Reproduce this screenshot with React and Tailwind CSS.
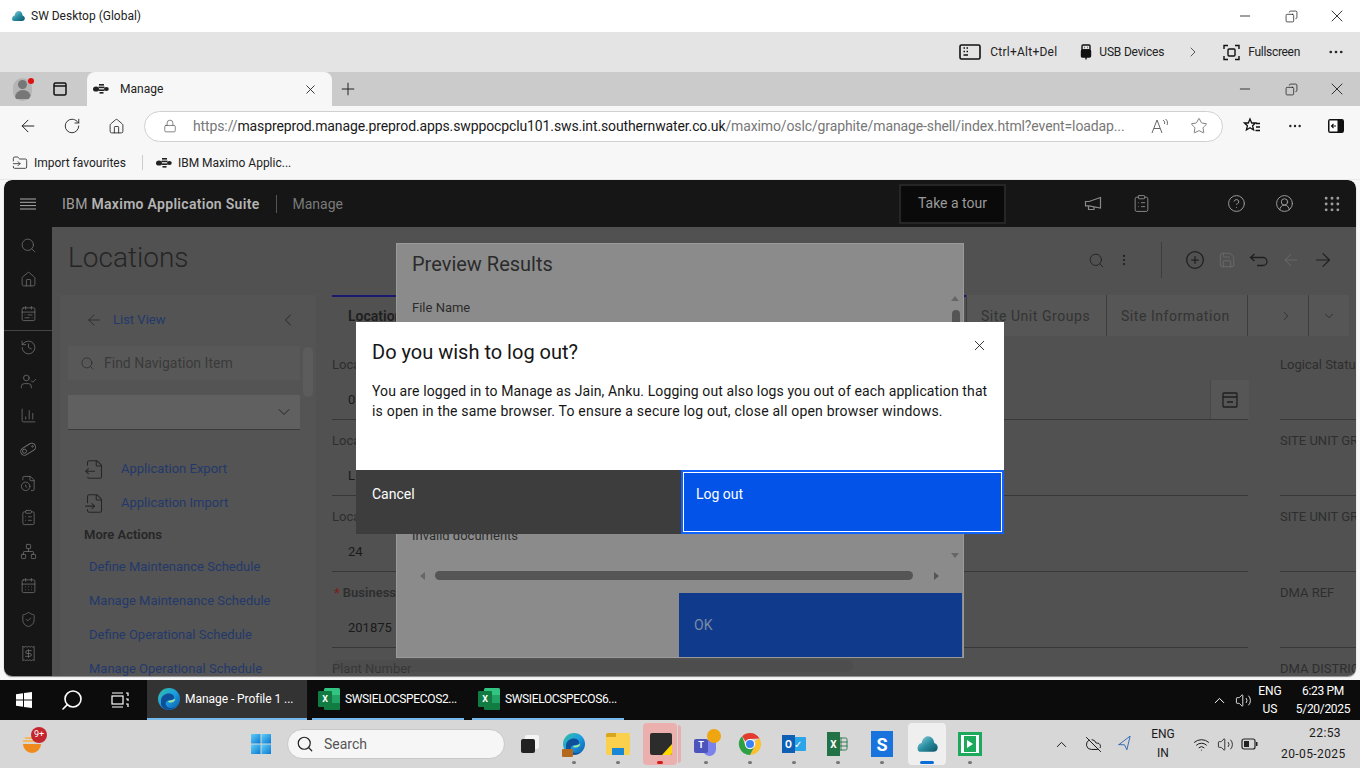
import {
  ArrowLeft,
  ArrowRight,
  ChevronDown,
  ChevronLeft,
  ChevronRight,
  ChevronUp,
  CircleHelp,
  CirclePlus,
  CalendarDays,
  ChartColumn,
  ClipboardList,
  CircleUserRound,
  EllipsisVertical,
  FileInput,
  FileOutput,
  FolderInput,
  Grip,
  History,
  House,
  Lock,
  Minus,
  MoreHorizontal,
  Network,
  Navigation,
  Plus,
  RotateCw,
  Save,
  Search,
  ShieldCheck,
  Star,
  UserCheck,
  Volume2,
  Wifi,
  X,
  CloudOff,
  Receipt,
  FileClock,
  Table,
  Copy,
  CalendarRange,
} from "lucide-react";

const ui = "font-['Roboto',sans-serif]";

function WinControls() {
  return (
    <div className="flex items-center ml-auto text-[#111] h-full">
      <div className="w-[46px] flex justify-center">
        <Minus size={16} strokeWidth={1.2} />
      </div>
      <div className="w-[46px] flex justify-center">
        <Copy size={13} strokeWidth={1.3} className="-scale-x-100" />
      </div>
      <div className="w-[46px] flex justify-center">
        <X size={20} strokeWidth={1} />
      </div>
    </div>
  );
}

function Bee({ className }) {
  return (
    <svg width="16" height="12" viewBox="0 0 16 12" className={className}>
      <ellipse cx="3" cy="6" rx="3" ry="2.6" fill="#222" />
      <ellipse cx="13.4" cy="6" rx="2.4" ry="2" fill="#222" />
      <rect x="6" y="1" width="5" height="1.6" fill="#222" />
      <rect x="5.5" y="3.6" width="6" height="1.6" fill="#222" />
      <rect x="5.5" y="6.4" width="6" height="1.6" fill="#222" />
      <rect x="6.5" y="9" width="4" height="1.6" fill="#222" />
    </svg>
  );
}

function SwLogo({ size = 14 }) {
  return (
    <svg width={size} height={size} viewBox="0 0 14 14">
      <defs>
        <linearGradient id="swg" x1="0" y1="0" x2="1" y2="1">
          <stop offset="0" stopColor="#9fd8e0" />
          <stop offset="0.5" stopColor="#2a8fa3" />
          <stop offset="1" stopColor="#0c5263" />
        </linearGradient>
      </defs>
      <path d="M1 10 C1 7.5 2.5 6.5 3.6 6.4 C4 3.4 6 2 7.6 2 C10 2 11.4 4 11.6 6.4 C13 6.8 14 8 13.8 9.6 C13.6 11.4 12.4 12 11 12 L3 12 C1.8 12 1 11.2 1 10 Z" fill="url(#swg)" />
    </svg>
  );
}

function Edge({ size = 24, id = "e1" }) {
  return (
    <svg width={size} height={size} viewBox="0 0 24 24">
      <defs>
        <linearGradient id={id} x1="0" y1="0" x2="1" y2="1">
          <stop offset="0" stopColor="#35c1a0" />
          <stop offset="0.5" stopColor="#1b9de2" />
          <stop offset="1" stopColor="#0c59a4" />
        </linearGradient>
      </defs>
      <circle cx="12" cy="12" r="11" fill={`url(#${id})`} />
      <path d="M4 13 C5 7 12 5 16 8 C18 10 17 13 14 13 C10 13 8 15 9 18 C10 21 14 22 18 20 C15 24 7 24 4 18 Z" fill="#0f4f9a" />
      <path d="M11 14.5 C12 13 17 13.5 18 11.5 C19 14 15 16 12 15.5 Z" fill="#9fe6a0" />
    </svg>
  );
}

function ExcelIcon({ size = 18 }) {
  return (
    <div className="relative" style={{ width: size, height: size }}>
      <div className="absolute right-0 top-0 bottom-0 w-[72%] bg-[#21a366] rounded-[2px] overflow-hidden flex flex-col">
        <div className="flex-1 bg-[#33c481]" />
        <div className="flex-1 bg-[#21a366]" />
        <div className="flex-1 bg-[#107c41]" />
      </div>
      <div className="absolute left-0 top-[3px] bottom-[3px] w-[62%] bg-[#107c41] rounded-[1px] flex items-center justify-center text-white text-[9px] font-bold leading-none">
        X
      </div>
    </div>
  );
}

function Win11({ size = 22 }) {
  return (
    <svg width={size} height={size} viewBox="0 0 22 22">
      <defs>
        <linearGradient id="w11" x1="0" y1="0" x2="1" y2="1">
          <stop offset="0" stopColor="#5fd0f6" />
          <stop offset="1" stopColor="#0a78d4" />
        </linearGradient>
      </defs>
      <rect x="1" y="1" width="9.5" height="9.5" fill="url(#w11)" />
      <rect x="11.5" y="1" width="9.5" height="9.5" fill="url(#w11)" />
      <rect x="1" y="11.5" width="9.5" height="9.5" fill="url(#w11)" />
      <rect x="11.5" y="11.5" width="9.5" height="9.5" fill="url(#w11)" />
    </svg>
  );
}

function Chrome() {
  return (
    <svg width="24" height="24" viewBox="0 0 24 24">
      <path d="M12 1 A11 11 0 0 1 21.6 6.6 L12 7 A5 5 0 0 0 7.6 9.6 L4.2 4.2 A11 11 0 0 1 12 1Z" fill="#e33b2e" />
      <path d="M21.6 6.6 A11 11 0 0 1 12 23 L16.4 14.6 A5 5 0 0 0 16.6 9 Z" fill="#fbc02d" />
      <path d="M4.2 4.2 A11 11 0 0 0 12 23 L16.4 14.6 A5 5 0 0 1 7.6 14.6 Z" fill="#2ea043" />
      <circle cx="12" cy="12" r="5" fill="#fff" />
      <circle cx="12" cy="12" r="4" fill="#3b82f6" />
    </svg>
  );
}

function Bullhorn({ className }) {
  return (
    <svg width="18" height="16" viewBox="0 0 18 16" fill="none" stroke="currentColor" strokeWidth="1.2" className={className}>
      <path d="M16.5 1.5 V12 L5 9.8 H1.5 V5.5 H5 Z" />
      <path d="M4.5 10 V13.5 H10 V11" />
    </svg>
  );
}

function Belt() {
  return (
    <svg width="18" height="18" viewBox="0 0 18 18" fill="none" stroke="currentColor" strokeWidth="0.9">
      <rect x="1" y="5.5" width="16" height="7.5" rx="3.7" transform="rotate(-32 9 9)" />
      <circle cx="5.5" cy="11.2" r="2" />
      <circle cx="13.5" cy="6.4" r="0.8" />
    </svg>
  );
}

function PageHeader() {
  return (
    <div className="h-[47px] bg-[#161616] flex items-center shrink-0 rounded-t-[8px]">
      <div className="w-[48px] flex justify-center text-[#aaa]">
        <svg width="16" height="12" viewBox="0 0 16 12" stroke="currentColor" strokeWidth="1">
          <path d="M0 1 H16 M0 4.3 H16 M0 7.6 H16 M0 11 H16" />
        </svg>
      </div>
      <div className="ml-[10px] mt-[2px] text-[14px] tracking-[0.3px] text-[#a0a0a0]">
        IBM <span className="font-semibold text-[#b4b4b4]">Maximo Application Suite</span>
      </div>
      <div className="w-px h-[18px] bg-[#555] ml-[16px]" />
      <div className="ml-[16px] mt-[2px] text-[14px] text-[#7a7a7a]">Manage</div>
      <div className="ml-[556px] w-[107px] h-[40px] bg-[#0a0a0a] border-2 border-[#262626] flex items-center justify-center text-[14px] text-[#9a9a9a]">
        Take a tour
      </div>
      <Bullhorn className="ml-[78px] text-[#8a8a8a]" />
      <ClipboardList size={19} strokeWidth={1.2} className="ml-[30px] text-[#8a8a8a]" />
      <CircleHelp size={19} strokeWidth={1.2} className="ml-[76px] text-[#a0a0a0]" />
      <CircleUserRound size={19} strokeWidth={1.2} className="ml-[29px] text-[#a0a0a0]" />
      <Grip size={20} strokeWidth={1.5} className="ml-[28px] text-[#a0a0a0]" />
    </div>
  );
}

const sideIcons = [
  Search,
  House,
  CalendarRange,
  History,
  UserCheck,
  ChartColumn,
  Belt,
  FileClock,
  ClipboardList,
  Network,
  CalendarDays,
  ShieldCheck,
  Receipt,
];

function SideBar() {
  return (
    <div className="w-[48px] bg-[#161616] shrink-0 flex flex-col items-center pt-[1px]">
      {sideIcons.map((Icon, i) => (
        <div key={i} className={"h-[34px] w-full flex items-center justify-center text-[#737373] " + (i === 3 ? "border-t border-[#444]" : "")}>
          <Icon size={17} strokeWidth={1.1} />
        </div>
      ))}
    </div>
  );
}

function NavLink({ children }) {
  return <div className="h-[34px] flex items-center pl-[21px] text-[13px] text-[#23396b] whitespace-nowrap">{children}</div>;
}

function LeftPanel() {
  return (
    <div className="w-[256px] bg-[#545454] shrink-0 pl-[8px] relative">
      <div className="flex items-center h-[50px] pl-[17px] text-[13px] text-[#23396b] whitespace-nowrap">
        <ArrowLeft size={18} strokeWidth={1} className="text-[#262626] mr-[10px]" />
        List View
        <ChevronLeft size={20} strokeWidth={1.2} className="text-[#262626] ml-[113px]" />
      </div>
      <div className="w-[232px] h-[34px] bg-[#585858] flex items-center pl-[12px] mt-[1px] text-[14px] text-[#3a3a3a]">
        <Search size={15} strokeWidth={1.1} className="text-[#262626] mr-[9px]" />
        Find Navigation Item
      </div>
      <div className="w-[232px] h-[35px] bg-[#606060] border-b border-[#3a3a3a] mt-[15px] flex items-center justify-end pr-[6px] text-[#262626]">
        <ChevronDown size={20} strokeWidth={1.2} />
      </div>
      <div className="h-[34px] flex items-center mt-[22px] pl-[16px] text-[13px] text-[#23396b]">
        <FileOutput size={21} strokeWidth={1.2} className="text-[#262626] mr-[16px]" />
        Application Export
      </div>
      <div className="h-[34px] flex items-center pl-[16px] text-[13px] text-[#23396b]">
        <FileInput size={21} strokeWidth={1.2} className="text-[#262626] mr-[16px]" />
        Application Import
      </div>
      <div className="h-[30px] flex items-center pl-[16px] text-[13px] font-semibold text-[#262626]">More Actions</div>
      <NavLink>Define Maintenance Schedule</NavLink>
      <NavLink>Manage Maintenance Schedule</NavLink>
      <NavLink>Define Operational Schedule</NavLink>
      <NavLink>Manage Operational Schedule</NavLink>
      <div className="absolute right-[3px] top-[52px] w-[10px] h-[50px] rounded-full bg-[#5c5c5c]" />
    </div>
  );
}

function Field({ label, value, children, bold }) {
  return (
    <div className="h-[76px]">
      <div className={"h-[20px] flex items-center text-[13px] text-[#2e2e2e] whitespace-nowrap " + (bold ? "font-semibold" : "")}>
        {bold && <span className="text-[#7a1f1f] ml-[2px] mr-[3px]">*</span>}
        {label}
      </div>
      <div className="h-[40px] mt-[5px] pl-[16px] border-b border-[#383838] flex items-center text-[13px] text-[#1a1a1a]">
        {value}
        {children}
      </div>
    </div>
  );
}

function Tabs() {
  return (
    <div className="h-[41px] flex items-center text-[14px] text-[#333] shrink-0 tracking-[0.55px]">
      <div className="w-[634px] h-full border-t-2 border-[#1a1a6e] pl-[16px] flex items-center font-semibold text-[#1f1f1f] tracking-normal">
        Locations
      </div>
      <div className="h-full w-px bg-[#3d3d3d]" />
      <div className="w-[140px] h-full pl-[14px] pt-[1px] flex items-center bg-[#565656] border-r border-[#3d3d3d] whitespace-nowrap">Site Unit Groups</div>
      <div className="w-[141px] h-full pl-[14px] pt-[1px] flex items-center bg-[#565656] border-r border-[#3d3d3d] whitespace-nowrap">Site Information</div>
      <div className="w-[61px] h-full flex items-center justify-center bg-[#565656] border-r border-[#3d3d3d] text-[#222]">
        <ChevronRight size={14} strokeWidth={1.2} className="ml-[16px]" />
      </div>
      <div className="w-[40px] h-full flex items-center justify-center bg-[#565656] text-[#222]">
        <ChevronDown size={14} strokeWidth={1.2} />
      </div>
    </div>
  );
}

function Content() {
  return (
    <div className="flex-1 min-w-0 bg-[#515151] flex flex-col overflow-hidden">
      <div className="h-[68px] shrink-0 flex items-start">
        <div className="ml-[16px] mt-[10px] text-[28px] font-light text-[#252525]">Locations</div>
        <div className="ml-auto flex items-center mt-[15px] text-[#1f1f1f] h-[36px]">
          <Search size={17} strokeWidth={1.2} />
          <EllipsisVertical size={14} strokeWidth={1.8} className="ml-[12px]" />
          <div className="w-px h-[36px] bg-[#3d3d3d] ml-[30px]" />
          <CirclePlus size={20} strokeWidth={1.5} className="ml-[23px]" />
          <Save size={18} strokeWidth={1.1} className="ml-[13px] text-[#6e6e6e]" />
          <svg width="20" height="14" viewBox="0 0 20 14" fill="none" stroke="currentColor" strokeWidth="1.3" className="ml-[13px]">
            <path d="M5.5 1 L1.5 4.5 L5.5 8 M1.5 4.5 H14 A4 4 0 0 1 14 12.5 H8" />
          </svg>
          <ArrowLeft size={20} strokeWidth={1} className="ml-[12px] text-[#6e6e6e]" />
          <ArrowRight size={22} strokeWidth={1.3} className="ml-[11px] mr-[22px]" />
        </div>
      </div>
      <div className="flex-1 flex pl-[8px] gap-[16px] min-h-0">
        <LeftPanel />
        <div className="flex-1 min-w-0 flex flex-col">
          <Tabs />
          <div className="flex pt-[19px]">
            <div className="w-[916px] shrink-0">
              <Field label="Location" value="0">
                <div className="ml-auto -mr-px w-[39px] h-full border-l border-[#484848] bg-[#565656] flex items-center justify-center text-[#1f1f1f]">
                  <svg width="18" height="18" viewBox="0 0 18 18" fill="none" stroke="currentColor" strokeWidth="1.3">
                    <rect x="2" y="2" width="14" height="14" rx="1" />
                    <path d="M2 6 H16 M6 11 H12" />
                  </svg>
                </div>
              </Field>
              <Field label="Location" value="L" />
              <Field label="Location" value="24" />
              <Field label="Business" value="201875" bold />
              <Field label="Plant Number" value="" />
            </div>
            <div className="flex-1 ml-[32px] overflow-hidden">
              <Field label="Logical Status" value="" />
              <Field label="SITE UNIT GROUP" value="" />
              <Field label="SITE UNIT GROUP" value="" />
              <Field label="DMA REF" value="" />
              <Field label="DMA DISTRICT" value="" />
            </div>
          </div>
        </div>
      </div>
    </div>
  );
}

function PreviewModal() {
  return (
    <div className="absolute left-[396px] top-[243px] w-[568px] h-[415px] bg-[#8b8b8b] border border-[#9a9a9a] text-[#2b2b2b]">
      <div className="pl-[15px] pt-[6px] text-[20px] leading-[28px]">Preview Results</div>
      <div className="pl-[15px] mt-[21px] text-[13px] leading-[18px]">File Name</div>
      <div className="pl-[15px] mt-[210px] text-[13px] leading-[18px]">Invalid documents</div>
      <div className="absolute right-[3px] top-[52px] bottom-[99px] w-[10px] flex flex-col items-center justify-between">
        <div className="w-0 h-0 border-x-[4px] border-x-transparent border-b-[5px] border-b-[#666]" />
        <div className="w-0 h-0 border-x-[4px] border-x-transparent border-t-[5px] border-t-[#666]" />
      </div>
      <div className="absolute right-[3px] top-[66px] w-[8px] h-[20px] rounded-full bg-[#555]" />
      <div className="absolute left-[23px] right-[24px] top-[327px] flex items-center">
        <div className="w-0 h-0 border-y-[4px] border-y-transparent border-r-[5px] border-r-[#666]" />
        <div className="flex-1 h-[9px] rounded-full bg-[#555] ml-[10px] mr-[21px]" />
        <div className="w-0 h-0 border-y-[4px] border-y-transparent border-l-[5px] border-l-[#555]" />
      </div>
      <div className="absolute right-[1px] bottom-[0px] w-[283px] h-[64px] bg-[#103a8c] flex items-center pl-[15px] text-[14px] text-[#7b8aa3]">
        OK
      </div>
    </div>
  );
}

function LogoutModal() {
  return (
    <div className="absolute left-[356px] top-[322px] w-[648px] h-[212px] bg-white flex flex-col">
      <div className="flex-1 px-[16px] relative">
        <div className="text-[20px] leading-[28px] mt-[16px] text-[#161616]">Do you wish to log out?</div>
        <div className="text-[14px] leading-[20px] mt-[15px] text-[#161616] tracking-[0.12px] whitespace-nowrap">
          You are logged in to Manage as Jain, Anku. Logging out also logs you out of each application that
          <br />
          <span className="tracking-[0.2px]">is open in the same browser. To ensure a secure log out, close all open browser windows.</span>
        </div>
        <X size={17} strokeWidth={1.2} className="absolute right-[16px] top-[15px] text-[#161616]" />
      </div>
      <div className="h-[64px] flex text-[14px] text-white">
        <div className="w-[325px] bg-[#3d3d3d] pl-[16px] pt-[14px]">Cancel</div>
        <div className="flex-1 bg-[#0353e9] border-2 border-[#0f62fe] outline outline-1 -outline-offset-3 outline-white pl-[13px] pt-[12px]">Log out</div>
      </div>
    </div>
  );
}

function InnerTaskbar() {
  return (
    <div className="h-[40px] bg-[#0c0c0c] flex items-center text-white text-[12px] shrink-0">
      <div className="w-[48px] flex justify-center">
        <svg width="16" height="16" viewBox="0 0 16 16" fill="#fff">
          <path d="M0 2.2 L7 1.2 V7.5 H0 Z M8 1 L16 0 V7.5 H8 Z M0 8.5 H7 V14.8 L0 13.8 Z M8 8.5 H16 V16 L8 15 Z" />
        </svg>
      </div>
      <div className="w-[48px] flex justify-center">
        <Search size={24} strokeWidth={1.6} className="-scale-x-100" />
      </div>
      <div className="w-[48px] flex justify-center">
        <svg width="18" height="18" viewBox="0 0 18 18" fill="none" stroke="#fff" strokeWidth="1.2">
          <rect x="1" y="5" width="11" height="8" />
          <path d="M1 2 H12 M1 16 H12 M15 2 H17 V5 M15 8 H17 V10 M15 13 H17 V16" />
        </svg>
      </div>
      <div className="w-[3px]" />
      <div className="w-[160px] h-full bg-[#333] border-b-2 border-[#76b9ed] flex items-center pl-[10px] whitespace-nowrap tracking-[-0.05px]">
        <Edge id="e2" size={24} />
        <span className="ml-[4px]">Manage - Profile 1 ...</span>
      </div>
      <div className="w-[5px]" />
      <div className="w-[152px] h-full border-b-2 border-[#76b9ed] flex items-center pl-[6px] whitespace-nowrap tracking-[-0.35px]">
        <ExcelIcon size={22} />
        <span className="ml-[5px]">SWSIELOCSPECOS2...</span>
      </div>
      <div className="w-[8px]" />
      <div className="w-[152px] h-full border-b-2 border-[#76b9ed] flex items-center pl-[6px] whitespace-nowrap tracking-[-0.35px]">
        <ExcelIcon size={22} />
        <span className="ml-[5px]">SWSIELOCSPECOS6...</span>
      </div>
      <div className="ml-auto flex items-center">
        <ChevronUp size={17} strokeWidth={1.4} />
        <Volume2 size={17} strokeWidth={1.2} className="ml-[7px]" />
        <div className="ml-[4px] w-[28px] text-center leading-[18px]">
          ENG
          <br />
          US
        </div>
        <div className="ml-[11px] w-[56px] text-center leading-[18px] mr-[9px] whitespace-nowrap tracking-[-0.3px]">
          6:23 PM
          <br />
          5/20/2025
        </div>
      </div>
    </div>
  );
}

function Dock({ children, dot, bg, w = 44 }) {
  return (
    <div className={"relative h-[42px] flex items-center justify-center rounded-[4px] shrink-0 " + (bg || "")} style={{ width: w }}>
      {children}
      {dot && <div className={"absolute bottom-[1px] left-1/2 -translate-x-1/2 h-[3px] rounded-full " + dot} />}
    </div>
  );
}

function OuterTaskbar() {
  return (
    <div className="h-[48px] bg-[#d7d7d7] flex items-center text-[#1a1a1a] text-[12px] relative">
      <div className="w-[64px] relative flex justify-center">
        <svg width="24" height="24" viewBox="0 0 24 24">
          <path d="M3 12 H21 A9 9 0 0 1 3 12Z" fill="#ef8a1f" />
          <path d="M5 6 H14 M3 9 H16" stroke="#f4b860" strokeWidth="2" />
        </svg>
        <div className="absolute left-[31px] -top-[5px] w-[16px] h-[16px] rounded-full bg-[#c4262e] text-white text-[9px] flex items-center justify-center">
          9+
        </div>
      </div>
      <div className="ml-[186px]">
        <Win11 />
      </div>
      <div className="ml-[15px] w-[218px] h-[30px] rounded-full bg-[#f6f6f6] border border-[#c8c8c8] flex items-center pl-[8px] text-[14px] text-[#555] shrink-0">
        <Search size={18} strokeWidth={1.6} className="text-[#222] mr-[10px]" />
        Search
      </div>
      <div className="ml-[3px] flex items-center">
        <Dock>
          <div className="relative w-[18px] h-[18px]">
            <div className="absolute right-0 top-0 w-[14px] h-[14px] bg-[#f4f4f4] rounded-[2px]" />
            <div className="absolute left-0 bottom-0 w-[14px] h-[14px] bg-[#222] rounded-[2px]" />
          </div>
        </Dock>
        <Dock dot="w-[4px] bg-[#777]">
          <Edge id="e3" size={24} />
          <div className="absolute left-[10px] bottom-[8px] w-[11px] h-[8px] bg-[#b4691d] rounded-[1px]" />
        </Dock>
        <Dock dot="w-[4px] bg-[#777]">
          <div className="w-[24px] h-[22px] rounded-[2px] bg-[#fbd04c] relative overflow-hidden">
            <div className="absolute left-0 top-0 w-[10px] h-[4px] bg-[#d9a520]" />
            <div className="absolute left-[6px] right-[6px] bottom-0 h-[7px] bg-[#1a86d6]" />
          </div>
        </Dock>
        <div className="w-[3px]" />
        <div className="flex items-center w-[38px] shrink-0">
          <Dock bg="bg-[#ebb0ad] h-[40px]" dot="w-[6px] bg-[#d01c1c]" w={34}>
            <div className="w-[22px] h-[22px] bg-[#2c2c2c] rounded-[2px] relative overflow-hidden ml-[1px]">
              <div className="absolute right-0 bottom-0 w-0 h-0 border-l-[10px] border-l-transparent border-b-[11px] border-b-[#ffd800]" />
            </div>
          </Dock>
          <div className="w-[3px] ml-[1px] h-[38px] rounded-r-[3px] bg-[#e4b0ad]" />
        </div>
        <div className="w-[3px]" />
        <Dock dot="w-[4px] bg-[#777]">
          <div className="relative w-[24px] h-[24px]">
            <div className="absolute left-0 bottom-[3px] w-[14px] h-[14px] bg-[#4b53bc] rounded-[2px] text-white text-[9px] font-bold flex items-center justify-center z-10">T</div>
            <div className="absolute left-[9px] bottom-0 w-[13px] h-[16px] bg-[#7b83eb] rounded-b-full" />
            <div className="absolute right-[-3px] top-[-3px] w-[14px] h-[14px] rounded-full bg-[#eea50e]" />
          </div>
        </Dock>
        <Dock dot="w-[4px] bg-[#777]">
          <Chrome />
        </Dock>
        <Dock dot="w-[4px] bg-[#777]">
          <div className="relative w-[24px] h-[24px]">
            <div className="absolute right-0 top-[5px] w-[17px] h-[14px] bg-[#2aa5e8] rounded-[1px] text-white text-[10px] flex items-center justify-center">✓</div>
            <div className="absolute left-0 top-[3px] w-[13px] h-[18px] bg-[#0f5fb5] text-white text-[10px] font-bold flex items-center justify-center">O</div>
          </div>
        </Dock>
        <Dock dot="w-[4px] bg-[#777]">
          <div className="relative w-[22px] h-[24px]">
            <Table size={16} strokeWidth={1.3} className="absolute right-0 top-[4px] text-[#217346]" />
            <div className="absolute left-0 top-0 w-[13px] h-[24px] bg-[#217346] text-white text-[10px] font-bold flex items-center justify-center">X</div>
          </div>
        </Dock>
        <Dock dot="w-[4px] bg-[#777]">
          <div className="w-[22px] h-[26px] bg-[#1874dc] text-white text-[18px] font-bold flex items-center justify-center">S</div>
        </Dock>
        <div className="w-[4px]" />
        <Dock bg="bg-[#efefef]" dot="w-[14px] bg-[#0a6cd6]" w={38}>
          <SwLogo size={22} />
        </Dock>
        <div className="w-[2px]" />
        <Dock dot="w-[4px] bg-[#777]">
          <div className="w-[24px] h-[24px] border-[3px] border-[#1ca95b] bg-white flex items-center justify-center">
            <div className="w-[12px] h-[16px] bg-[#1ca95b] flex items-center justify-center">
              <div className="w-0 h-0 border-y-[4px] border-y-transparent border-l-[6px] border-l-white" />
            </div>
          </div>
        </Dock>
      </div>
      <div className="ml-auto flex items-center">
        <ChevronUp size={17} strokeWidth={1.4} />
        <CloudOff size={17} strokeWidth={1.4} className="ml-[15px]" />
        <Navigation size={16} strokeWidth={1.2} className="ml-[15px] text-[#1f5fae] -rotate-12" />
        <div className="ml-[15px] w-[30px] text-center leading-[19px]">
          ENG
          <br />
          IN
        </div>
        <Wifi size={17} strokeWidth={1.4} className="ml-[15px]" />
        <Volume2 size={17} strokeWidth={1.2} className="ml-[7px]" />
        <svg width="17" height="12" viewBox="0 0 17 12" className="ml-[7px]">
          <rect x="1" y="1" width="13" height="10" rx="2" fill="none" stroke="#222" strokeWidth="1.2" />
          <rect x="3" y="3" width="5" height="6" fill="#222" />
          <rect x="15" y="4" width="1.5" height="4" fill="#222" />
        </svg>
        <div className="ml-[23px] w-[60px] text-right leading-[21px] mr-[19px] whitespace-nowrap tracking-[0.4px]">
          22:53
          <br />
          20-05-2025
        </div>
      </div>
    </div>
  );
}

export default function App() {
  return (
    <div className={"w-[1360px] h-[768px] relative overflow-hidden bg-[#f7f7f7] flex flex-col " + ui}>
      {/* remote desktop title */}
      <div className="h-[32px] bg-white flex items-center pl-[11px] text-[12px] text-[#222] shrink-0">
        <SwLogo />
        <span className="ml-[6px]">SW Desktop (Global)</span>
        <WinControls />
      </div>
      <div className="h-[40px] bg-[#e4e4e4] flex items-center justify-end text-[12px] text-[#222] shrink-0">
        <svg width="22" height="16" viewBox="0 0 22 16" className="mr-[9px]">
          <rect x="1" y="1" width="20" height="14" rx="1.5" fill="none" stroke="#111" strokeWidth="1.6" />
          <path d="M4.5 4 H6 M7.5 4 H9 M4.5 7.5 H6 M7.5 7.5 H9 M4.5 11 H9" stroke="#111" strokeWidth="1.5" />
        </svg>
        <span className="tracking-[0.25px]">Ctrl+Alt+Del</span>
        <svg width="14" height="16" viewBox="0 0 14 16" fill="none" stroke="#111" strokeWidth="1.4" className="ml-[22px] mr-[6px]">
          <rect x="3" y="1" width="8" height="5" rx="1" />
          <rect x="2.5" y="6" width="9" height="7" rx="1" fill="#111" />
          <path d="M5.5 3.5 H6 M8 3.5 H8.5 M7 13 V15.5" />
        </svg>
        <span className="tracking-[-0.2px]">USB Devices</span>
        <ChevronRight size={16} strokeWidth={1.1} className="ml-[21px]" />
        <svg width="17" height="17" viewBox="0 0 17 17" fill="none" stroke="#111" strokeWidth="1.4" className="ml-[22px] mr-[8px]">
          <path d="M1 5 V1.5 H5 M12 1.5 H16 V5 M16 12 V15.5 H12 M5 15.5 H1 V12" />
          <rect x="5" y="5" width="7" height="7" rx="1" />
        </svg>
        <span className="tracking-[-0.3px]">Fullscreen</span>
        <MoreHorizontal size={18} strokeWidth={1.6} className="ml-[27px] mr-[15px]" />
      </div>
      {/* browser */}
      <div className="h-[34px] bg-[#cbcbcb] flex items-end shrink-0">
        <div className="w-[44px] h-full flex items-center justify-center relative">
          <div className="w-[19px] h-[23px] ml-[1px] rounded-full bg-[#b5b5b5] flex flex-col items-center justify-center overflow-hidden">
            <div className="w-[9px] h-[9px] rounded-full bg-[#777]" />
            <div className="w-[16px] h-[9px] rounded-t-full bg-[#777] mt-[1px]" />
          </div>
          <div className="absolute left-[28px] top-[6px] w-[6px] h-[6px] rounded-full bg-[#e01010]" />
        </div>
        <div className="w-[32px] h-full flex items-center justify-center text-[#222]">
          <svg width="16" height="16" viewBox="0 0 16 16" fill="none" stroke="#111" strokeWidth="1.5">
            <rect x="2" y="2" width="12" height="12" rx="1.5" />
            <path d="M2 5 H14" />
          </svg>
        </div>
        <div className="w-[11px]" />
        <div className="w-[245px] h-full bg-[#f7f7f7] rounded-t-[8px] flex items-center pl-[6px] text-[12px] text-[#222]">
          <Bee />
          <span className="ml-[11px]">Manage</span>
          <X size={15} strokeWidth={1.4} className="ml-auto mr-[14px]" />
        </div>
        <div className="h-full ml-[6px] flex items-center text-[#222]">
          <Plus size={20} strokeWidth={1.2} />
        </div>
        <WinControls />
      </div>
      <div className="h-[40px] flex items-center text-[#222] shrink-0">
        <ArrowLeft size={20} strokeWidth={1.2} className="ml-[18px]" />
        <RotateCw size={18} strokeWidth={1.2} className="ml-[25px]" />
        <House size={17} strokeWidth={1.2} className="ml-[27px]" />
        <div className="ml-[19px] w-[1079px] h-[31px] rounded-full bg-white border border-[#d0d0d0] flex items-center pl-[18px] text-[14px] whitespace-nowrap tracking-[-0.12px] shrink-0">
          <Lock size={14} strokeWidth={1.2} className="text-[#555] mr-[16px]" />
          <span className="text-[#777]">https://</span>
          <span className="text-[#1a1a1a]">maspreprod.manage.preprod.apps.swppocpclu101.sws.int.southernwater.co.uk</span>
          <span className="text-[#777]">/maximo/oslc/graphite/manage-shell/index.html?event=loadap...</span>
          <svg width="18" height="16" viewBox="0 0 18 16" fill="none" stroke="#666" strokeWidth="1" className="ml-auto">
            <path d="M1 15 L6 2 L11 15 M3 10.5 H9 M12 2 C13.5 3 14 4.5 13.5 6 M14.5 1 C16.5 2.5 17 5 16 7" />
          </svg>
          <Star size={18} strokeWidth={1} className="ml-[21px] mr-[14px] text-[#555]" />
        </div>
        <svg width="18" height="18" viewBox="0 0 18 18" fill="none" stroke="#111" strokeWidth="1.3" className="ml-[20px]">
          <path d="M7 2 L8.7 6 H12.5 L9.6 8.8 L10.6 13 L7 10.8 L3.4 13 L4.4 8.8 L1.5 6 H5.3 Z" />
          <path d="M13 6.5 H17 M13 10 H17 M12.5 13.5 H17" />
        </svg>
        <MoreHorizontal size={16} strokeWidth={1.6} className="ml-[26px]" />
        <svg width="16" height="14" viewBox="0 0 16 14" className="ml-[25px]">
          <rect x="0.75" y="0.75" width="14.5" height="12.5" rx="1.5" fill="#111" stroke="#111" strokeWidth="1.5" />
          <rect x="1.5" y="1.5" width="8" height="11" fill="#fff" />
          <path d="M8 7 H4 M5.5 5 L3.5 7 L5.5 9" stroke="#111" strokeWidth="1.1" fill="none" />
        </svg>
      </div>
      <div className="h-[34px] border-b border-[#e8e8e8] flex items-center pl-[12px] text-[12px] text-[#222] shrink-0">
        <FolderInput size={16} strokeWidth={1.2} />
        <span className="ml-[6px]">Import favourites</span>
        <div className="w-px h-[15px] bg-[#ccc] ml-[16px]" />
        <Bee className="ml-[13px]" />
        <span className="ml-[6px]">IBM Maximo Applic...</span>
      </div>
      {/* maximo window */}
      <div className="h-[496px] mx-[4px] flex flex-col rounded-[8px] overflow-hidden shrink-0 shadow-[0_1px_1px_#888]">
        <PageHeader />
        <div className="flex-1 flex min-h-0">
          <SideBar />
          <Content />
        </div>
      </div>
      <div className="h-[4px] shrink-0" />
      <InnerTaskbar />
      <OuterTaskbar />
      <div className="absolute left-[333px] top-[660px] w-[520px] h-[12px] rounded-full bg-[#484848]/40" />
      <PreviewModal />
      <LogoutModal />
    </div>
  );
}
